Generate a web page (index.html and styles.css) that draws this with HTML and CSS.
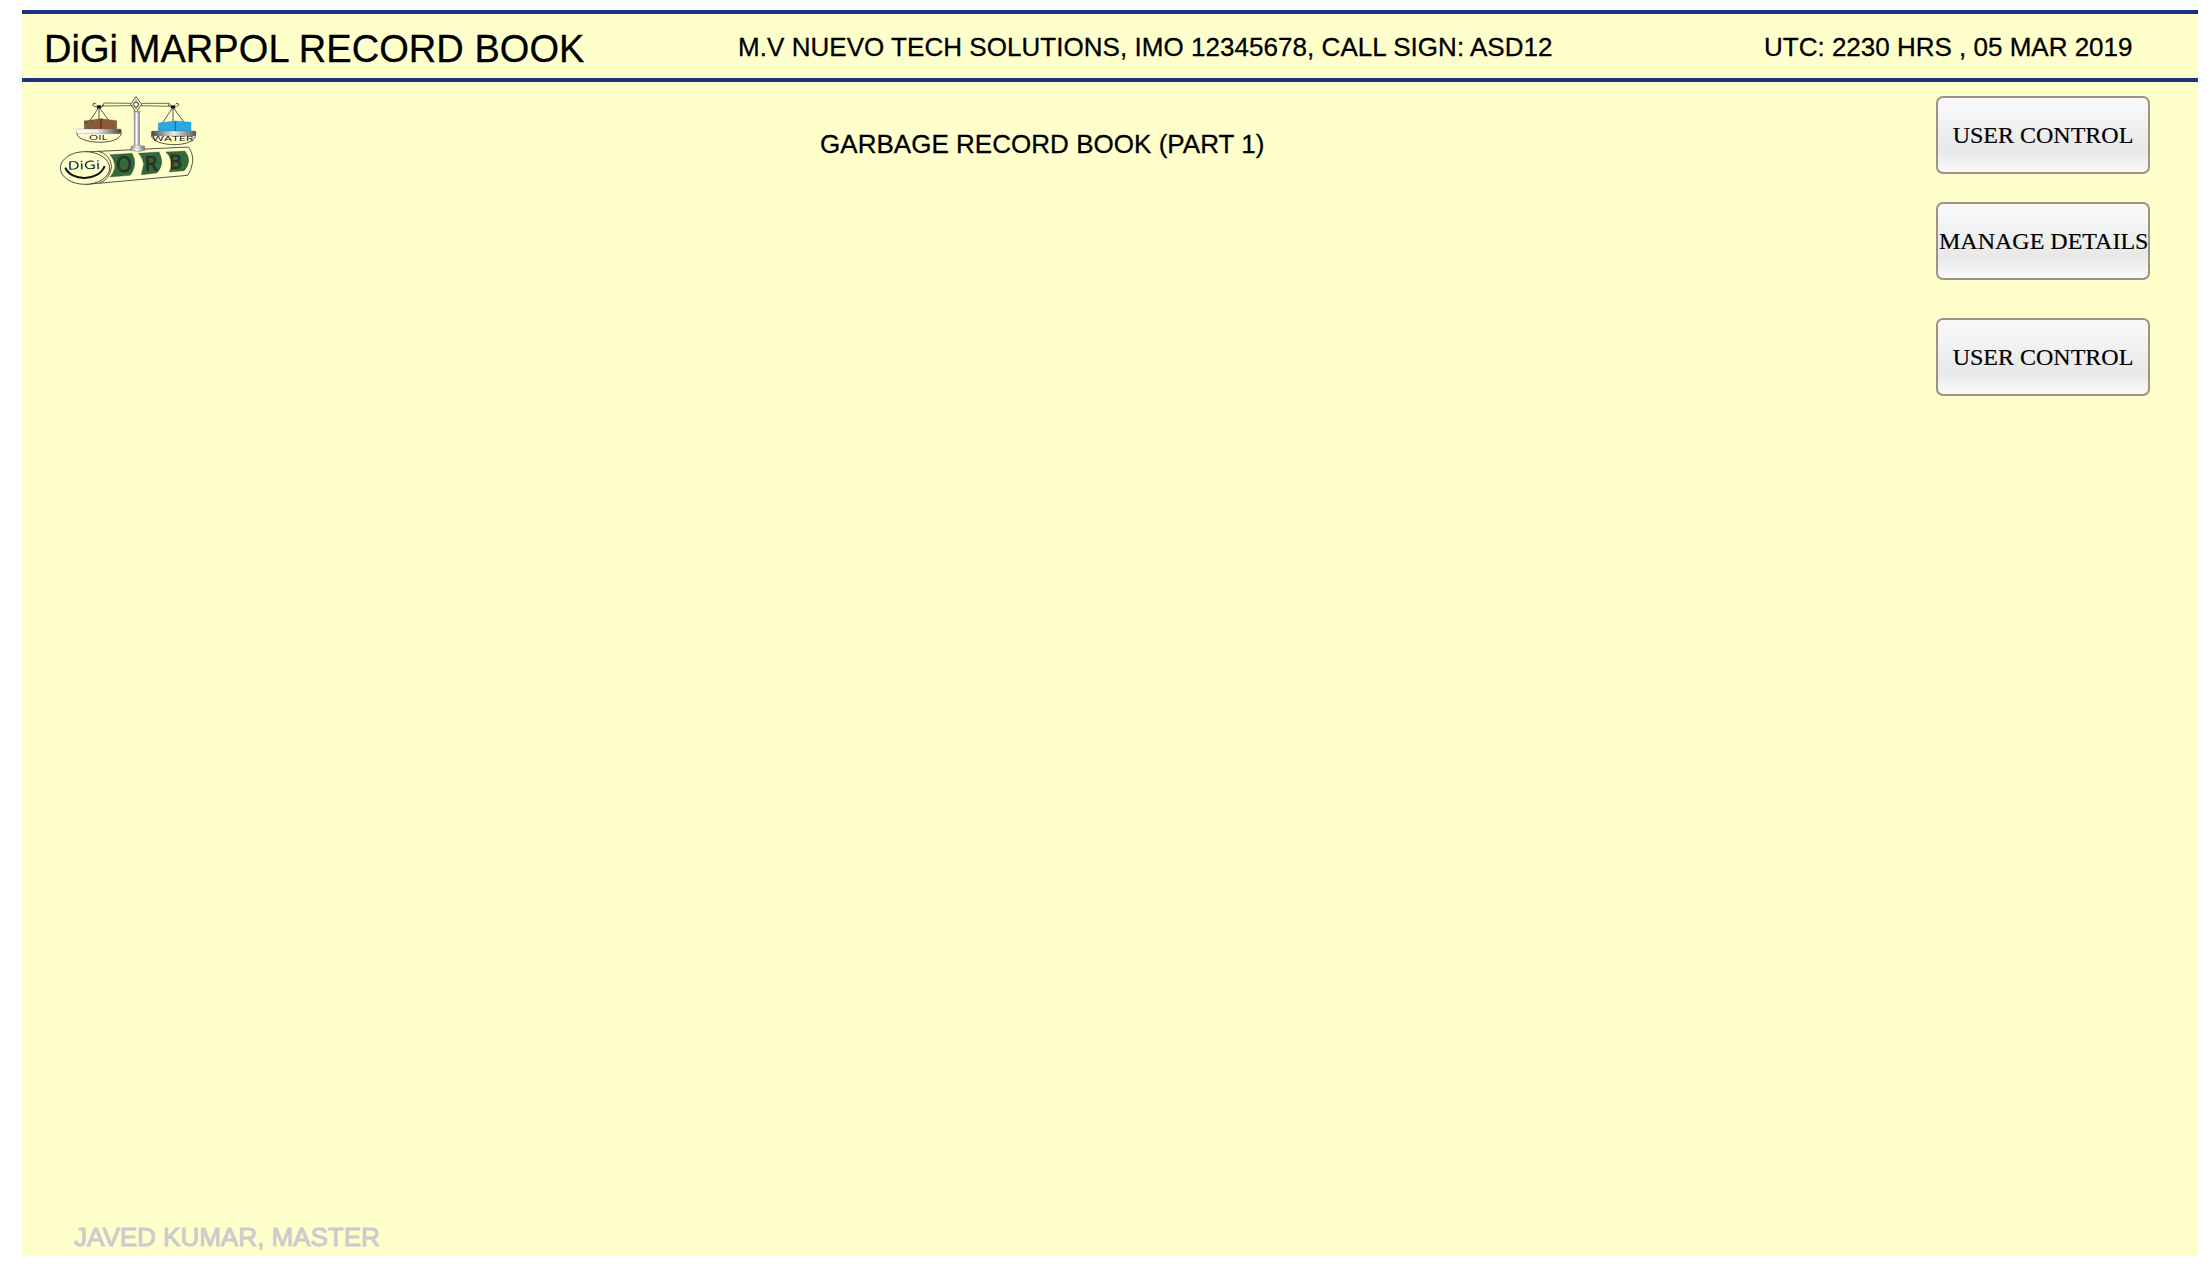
FILE: index.html
```html
<!DOCTYPE html>
<html lang="en">
<head>
<meta charset="utf-8">
<title>DiGi MARPOL Record Book</title>
<link rel="stylesheet" href="styles.css">
</head>
<body>
<div class="panel">
  <header class="topbar">
    <h1 class="brand">DiGi MARPOL RECORD BOOK</h1>
    <div class="vessel">M.V NUEVO TECH SOLUTIONS, IMO 12345678, CALL SIGN: ASD12</div>
    <div class="clock">UTC: 2230 HRS , 05 MAR 2019</div>
  </header>
  <main class="content">
    <svg class="logo" viewBox="0 0 480 330" role="img" aria-label="DiGi ORB">
      <defs>
        <linearGradient id="pan"><stop offset="0" stop-color="#fff"/><stop offset=".45" stop-color="#eee"/><stop offset="1" stop-color="#444"/></linearGradient>
        <linearGradient id="pan2"><stop offset="0" stop-color="#444"/><stop offset=".5" stop-color="#eee"/><stop offset="1" stop-color="#555"/></linearGradient>
        <linearGradient id="post"><stop offset="0" stop-color="#888"/><stop offset=".45" stop-color="#fff"/><stop offset="1" stop-color="#777"/></linearGradient>
      </defs>
      <g fill="none" stroke="#222" stroke-width="2.3">
        <!-- beam -->
        <path d="M157 63L162 54L242 55M157 63L246 62M276 55L358 55L364 64M272 62L360 64" stroke-width="2"/>
        <path d="M138 66l-10-5 3-7 8 3M157 66l4-8M358 64l-4-7M380 65l6-4-3-7-6 3"/>
        <path d="M258 35L242 58L258 82L275 58Z"/>
        <path d="M258 45L249 58L258 72L267 58Z" stroke-width="1.5"/>
        <circle cx="258" cy="59" r="7"/>
        <!-- suspension cords -->
        <path d="M146 68L103 132M147 68V134M148 68L196 133M368 68L325 132M369 68V134M370 68L417 133"/>
        <path d="M80 144C82 179 211 183 214 144M304 150C307 187 434 190 437 150"/>
      </g>
      <rect x="140" y="61" width="14" height="9" fill="#111"/>
      <rect x="362" y="61" width="14" height="9" fill="#111"/>
      <path d="M103 108L153 101L200 107V133H103Z" fill="#8b5a36" stroke="#3c2414"/>
      <path d="M153 101V133M103 108L111 115" stroke="#2b1a10" stroke-width="2.5"/>
      <path d="M325 114L376 108L423 112V139H325Z" fill="#29a9e1" stroke="#146c99"/>
      <path d="M376 108V139" stroke="#105880" stroke-width="2.5"/>
      <rect x="80" y="132" width="134" height="14" rx="4" fill="url(#pan)" stroke="#777"/>
      <rect x="304" y="138" width="134" height="15" rx="4" fill="url(#pan2)" stroke="#777"/>
      <text class="logo-text" x="117" y="166" font-size="24" textLength="56" lengthAdjust="spacingAndGlyphs">OIL</text>
      <text class="logo-text" x="307" y="168" font-size="21" textLength="124" lengthAdjust="spacingAndGlyphs">WATER</text>
      <rect x="252" y="80" width="17" height="102" fill="url(#post)" stroke="#888"/>
      <path d="M250 77H271V82H250Z" fill="#999"/>
      <!-- cylinder -->
      <path d="M105 201L415 186Q430 205 428 231Q424 256 413 271L110 298" fill="none" stroke="#222" stroke-width="2.3"/>
      <path d="M244 184Q262 177 284 184V196Q262 204 241 196Z" fill="url(#post)" stroke="#555"/>
      <path d="M244 185Q262 193 284 185" fill="none" stroke="#666"/>
      <path d="M145 199Q180 207 185 245Q179 284 148 294" fill="none" stroke="#222" stroke-width="2.3"/>
      <path d="M179 209L246 205Q256 222 254 240Q250 262 240 271L180 276Q193 261 195 243Q192 222 179 209Z" fill="#326b37" stroke="#24452a"/>
      <path d="M265 205L327 201Q337 220 335 236Q331 255 320 264L274 269Q277 255 281 238Q277 216 265 205Z" fill="#326b37" stroke="#24452a"/>
      <path d="M347 201L405 198Q417 214 416 230Q412 250 402 257L358 261Q364 249 364 231Q360 212 347 201Z" fill="#326b37" stroke="#24452a"/>
      <text class="logo-letter" x="199" y="262" font-size="66" textLength="47" lengthAdjust="spacingAndGlyphs">O</text>
      <text class="logo-letter" x="284" y="257" font-size="60" textLength="38" lengthAdjust="spacingAndGlyphs" transform="rotate(-2 300 230)">R</text>
      <text class="logo-letter" x="358" y="251" font-size="58" textLength="38" lengthAdjust="spacingAndGlyphs" transform="rotate(-2 375 230)">B</text>
      <ellipse cx="105" cy="249" rx="74" ry="49" fill="#ffc" stroke="#222" stroke-width="2.4"/>
      <text class="logo-text logo-name" x="53" y="253" font-size="35" textLength="97" lengthAdjust="spacingAndGlyphs" transform="rotate(-2 100 245)">DiGi</text>
      <path d="M46 248C62 289 146 291 164 243" fill="none" stroke="#111" stroke-width="6"/>
    </svg>
    <h2 class="book-title">GARBAGE RECORD BOOK (PART 1)</h2>
    <nav class="actions">
      <button class="action" type="button">USER CONTROL</button>
      <button class="action action-wide" type="button">MANAGE DETAILS</button>
      <button class="action" type="button">USER CONTROL</button>
    </nav>
  </main>
  <footer class="signed-in">JAVED KUMAR, MASTER</footer>
</div>
</body>
</html>
```
FILE: styles.css
```css
* { box-sizing: border-box; }

body {
  margin: 0;
  padding: 10px 14px 16px 22px;
  height: 1272px;
  background: #fff;
  color: #000;
  font-family: "Liberation Sans", Arial, sans-serif;
  font-size: 26px;
}

.panel {
  display: flex;
  flex-direction: column;
  height: 1246px;
  background: #ffc;
}

.topbar {
  display: grid;
  grid-template-columns: 694px 1026px 1fr;
  height: 72px;
  border-top: 4px solid #1a3281;
  border-bottom: 4px solid #1a3281;
  padding-left: 22px;
  white-space: nowrap;
}

.brand {
  margin: 0;
  padding-top: 13px;
  font-size: 38px;
  font-weight: 400;
  line-height: 44px;
  letter-spacing: 0.06px;
  -webkit-text-stroke: 0.3px #000;
}

.vessel,
.clock {
  padding-top: 18px;
  line-height: 30px;
  -webkit-text-stroke: 0.3px #000;
}

.vessel { letter-spacing: 0.045px; }

.content {
  flex: 1;
  display: grid;
  grid-template-columns: 770px 1fr 214px;
  align-items: start;
  padding: 3px 48px 0 28px;
}

.logo {
  display: block;
  width: 160px;
  height: 110px;
}

.logo-text {
  font-family: "Open Sans", sans-serif;
  fill: #111;
}

.logo-name { font-weight: 500; }

.logo-letter {
  font-family: "Open Sans", sans-serif;
  font-weight: 500;
  fill: #3d4140;
  stroke: #1c1c1c;
  stroke-width: 2px;
}

.book-title {
  margin: 0;
  padding-top: 44px;
  font-size: 26px;
  font-weight: 400;
  line-height: 30px;
  letter-spacing: 0.03px;
  -webkit-text-stroke: 0.3px #000;
}

.actions {
  display: flex;
  flex-direction: column;
  padding-top: 11px;
}

.action {
  width: 214px;
  height: 78px;
  margin: 0 0 38px;
  padding: 0;
  border: 2px solid #a09184;
  border-radius: 7px;
  background: linear-gradient(#fafafa 0%, #eee 50%, #e8e8e8 71%, #fafafa 100%);
  color: #000;
  font-family: "Liberation Serif", "Times New Roman", serif;
  font-size: 24px;
  white-space: nowrap;
  -webkit-text-stroke: 0.2px #000;
}

.action:first-child { margin-bottom: 28px; }

.action-wide { padding-left: 1px; }

.signed-in {
  padding: 0 0 4px 52px;
  color: #ccc;
  line-height: 30px;
  -webkit-text-stroke: 1px #ccc;
}
```
